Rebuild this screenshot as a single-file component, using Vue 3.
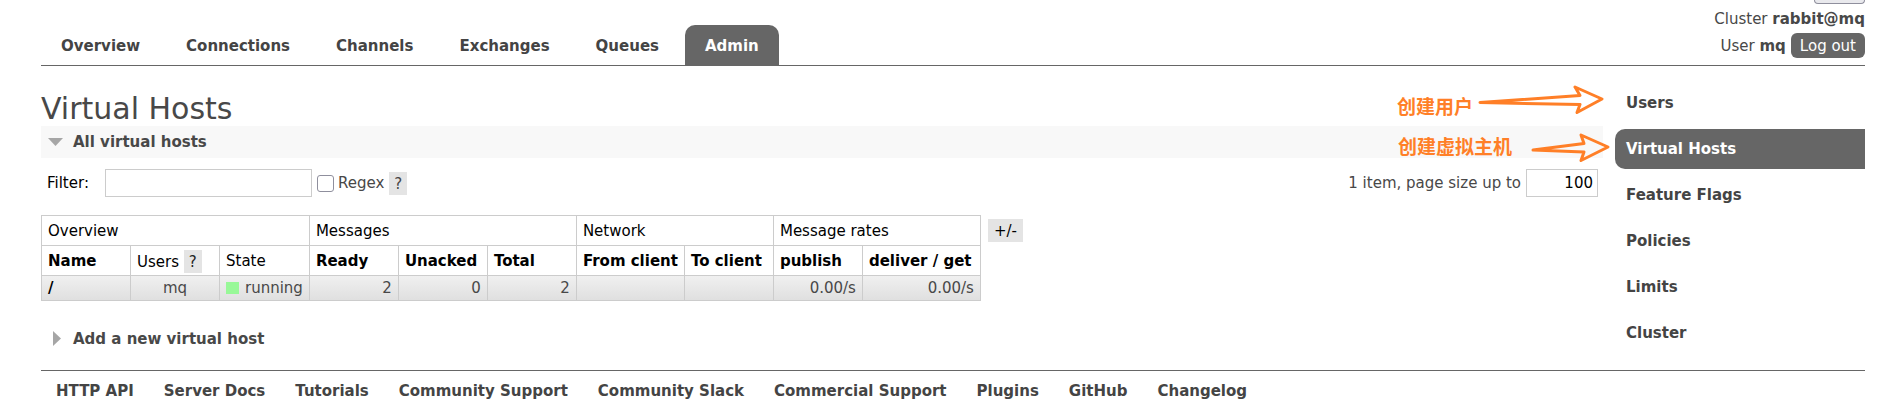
<script setup>
import { ref } from 'vue'

const tabs = ['Overview', 'Connections', 'Channels', 'Exchanges', 'Queues', 'Admin']
const adminLinks = ['Users', 'Virtual Hosts', 'Feature Flags', 'Policies', 'Limits', 'Cluster']
const footerLinks = [
  'HTTP API', 'Server Docs', 'Tutorials', 'Community Support', 'Community Slack',
  'Commercial Support', 'Plugins', 'GitHub', 'Changelog'
]
const filter = ref('')
const regex = ref(false)
const pageSize = ref('100')
</script>

<template>
  <div class="page">
    <header>
      <nav class="tabs" aria-label="Main">
        <a v-for="tab in tabs" :key="tab" href="#" :class="{ selected: tab === 'Admin' }">{{ tab }}</a>
      </nav>
      <div class="session">
        <button class="refresh" type="button" aria-label="Refresh"></button>
        <p>Cluster <b>rabbit@mq</b></p>
        <p class="user"><span>User <b>mq</b></span><button class="logout" type="button">Log out</button></p>
      </div>
    </header>

    <div class="layout">
      <main>
        <h1>Virtual Hosts</h1>
        <h2 class="open">
          <svg width="16" height="16" viewBox="0 0 16 16" aria-hidden="true"><path d="M0 4H15L7.500 12Z" fill="#a6a6a6" /></svg>
          All virtual hosts
        </h2>
        <div class="filterbar">
          <label class="name" for="filter">Filter:</label>
          <input id="filter" v-model="filter" class="box filter" type="text">
          <input id="regex" v-model="regex" class="tick" type="checkbox">
          <label for="regex">Regex</label>
          <button class="chip" type="button">?</button>
          <label class="size" for="size">1 item, page size up to</label>
          <input id="size" v-model="pageSize" class="box count" type="text">
        </div>

        <div class="listing">
          <table>
            <thead>
              <tr>
                <th colspan="3">Overview</th>
                <th colspan="3">Messages</th>
                <th colspan="2">Network</th>
                <th colspan="2">Message rates</th>
              </tr>
              <tr>
                <th class="sort">Name</th>
                <th>Users <button class="chip inline" type="button">?</button></th>
                <th>State</th>
                <th class="sort">Ready</th>
                <th class="sort">Unacked</th>
                <th class="sort">Total</th>
                <th class="sort">From client</th>
                <th class="sort">To client</th>
                <th class="sort">publish</th>
                <th class="sort wide">deliver / get</th>
              </tr>
            </thead>
            <tbody>
              <tr>
                <td><a href="#">/</a></td>
                <td class="center">mq</td>
                <td class="state"><i></i>running</td>
                <td class="num">2</td>
                <td class="num">0</td>
                <td class="num">2</td>
                <td></td>
                <td></td>
                <td class="num">0.00/s</td>
                <td class="num">0.00/s</td>
              </tr>
            </tbody>
          </table>
          <button class="chip columns" type="button">+/-</button>
        </div>

        <h2>
          <svg width="16" height="16" viewBox="0 0 16 16" aria-hidden="true"><path d="M5 0V15L13 7.500Z" fill="#a6a6a6" /></svg>
          Add a new virtual host
        </h2>

        <div class="note first">
          <span>创建用户</span>
          <svg width="130" height="30" viewBox="0 0 130 30" aria-hidden="true">
            <path d="M3 17.500L103 10.500L98 2L125 14L100 27.500L103 19.500Z" />
          </svg>
        </div>
        <div class="note second">
          <span>创建虚拟主机</span>
          <svg width="80" height="30" viewBox="0 0 80 30" aria-hidden="true">
            <path d="M3 17L54 10.500L51 2L78 14L51 27.500L54 19Z" />
          </svg>
        </div>
      </main>

      <nav class="side" aria-label="Admin">
        <a v-for="link in adminLinks" :key="link" href="#" :class="{ selected: link === 'Virtual Hosts' }">{{ link }}</a>
      </nav>
    </div>

    <footer>
      <a v-for="link in footerLinks" :key="link" href="#">{{ link }}</a>
    </footer>
  </div>
</template>

<style>
body {
  background: #fff;
}
</style>

<style scoped>
.page {
  padding: 0 20px 0 41px;
  color: #484848;
  font: 15px/20px Verdana, "DejaVu Sans", sans-serif;
}
.page * {
  box-sizing: border-box;
}
a {
  color: #444;
  font-weight: bold;
  text-decoration: none;
}
button,
input {
  margin: 0;
  font: inherit;
}
header {
  display: flex;
  justify-content: space-between;
  align-items: flex-end;
  border-bottom: 1px solid #666;
}
.tabs {
  display: flex;
  gap: 6px;
}
.tabs a {
  padding: 11px 20px 9px;
  border-radius: 10px 10px 0 0;
}
.tabs .selected,
.side .selected {
  background: #666;
  color: #fff;
}
.session {
  display: flex;
  flex-direction: column;
  align-items: flex-end;
  padding-bottom: 7px;
}
.session p {
  margin: 0;
}
.refresh {
  width: 51px;
  height: 4px;
  margin-bottom: 5px;
  padding: 0;
  border: 1px solid #8f8f9d;
  border-top: 0;
  border-radius: 0 0 4px 4px;
  background: #e9e9ed;
}
.session .user {
  display: flex;
  align-items: center;
  gap: 5px;
  margin-top: 4px;
}
.logout {
  padding: 3px 9px 2px;
  border: 0;
  border-radius: 6px;
  background: #666;
  color: #fff;
}
.layout {
  display: grid;
  grid-template-columns: 1fr 250px;
  gap: 12px;
}
main {
  position: relative;
  padding-top: 26px;
}
h1 {
  margin: 0;
  font-size: 30px;
  line-height: 34px;
  font-weight: normal;
}
h2 {
  display: flex;
  align-items: center;
  gap: 9px;
  margin: 0;
  padding: 6px 7px;
  font-size: 15px;
  line-height: 20px;
}
h2 svg {
  flex: none;
}
.open {
  background: #f8f8f8;
}
.filterbar {
  display: flex;
  align-items: center;
  padding: 11px 5px 18px 6px;
}
.name {
  width: 58px;
  color: #000;
}
.box {
  height: 28px;
  padding: 4px;
  border: 1px solid #ccc;
  background: #fff;
  color: #000;
}
.filter {
  width: 207px;
}
.tick {
  appearance: none;
  width: 17px;
  height: 17px;
  margin: 0 4px 0 5px;
  border: 1px solid #8f8f9d;
  border-radius: 3px;
  background: #fff;
}
.tick:checked {
  background: #666;
}
.chip {
  margin-left: 5px;
  padding: 2px 5px 1px;
  border: 0;
  background: #e4e4e4;
  color: #444;
}
.chip.inline {
  margin-left: 0;
  color: #222;
}
.chip.columns {
  margin: 4px 0 0 7px;
  padding: 2px 6px 1px;
  color: #000;
}
.size {
  margin: 0 5px 0 auto;
}
.count {
  width: 72px;
  text-align: right;
}
.listing {
  display: flex;
  align-items: flex-start;
  margin-bottom: 22px;
}
table {
  border-collapse: collapse;
}
th,
td {
  min-width: 89px;
  padding: 2px 6px;
  border: 1px solid #ccc;
  text-align: left;
  white-space: nowrap;
}
th {
  height: 30px;
  padding-top: 3px;
  color: #000;
  font-weight: normal;
}
th.sort {
  font-weight: bold;
}
th.wide {
  min-width: 118px;
}
td {
  height: 25px;
}
tbody tr {
  background: linear-gradient(#f0f0f0, #dfdfdf);
}
td a {
  color: #000;
}
td.center {
  text-align: center;
}
td.num {
  text-align: right;
}
.state i {
  display: inline-block;
  width: 13px;
  height: 12px;
  margin-right: 6px;
  background: #98f898;
  vertical-align: -1px;
}
.side {
  display: flex;
  flex-direction: column;
  gap: 6px;
  padding: 17px 0;
}
.side a {
  padding: 10px 11px;
  border-radius: 10px 0 0 10px;
}
.note {
  position: absolute;
  display: flex;
  align-items: flex-start;
  color: #ff7f27;
  font: bold 19px/30px "Liberation Sans", "Noto Sans CJK SC", sans-serif;
}
.note path {
  fill: none;
  stroke: #ff7f27;
  stroke-width: 3;
  stroke-linejoin: round;
}
.first {
  top: 19px;
  right: -4px;
  gap: 4px;
}
.first span {
  padding-top: 8px;
}
.second {
  top: 67px;
  right: -7px;
  gap: 18px;
}
footer {
  display: flex;
  gap: 30px;
  padding: 10px 15px;
  border-top: 1px solid #666;
}
</style>
